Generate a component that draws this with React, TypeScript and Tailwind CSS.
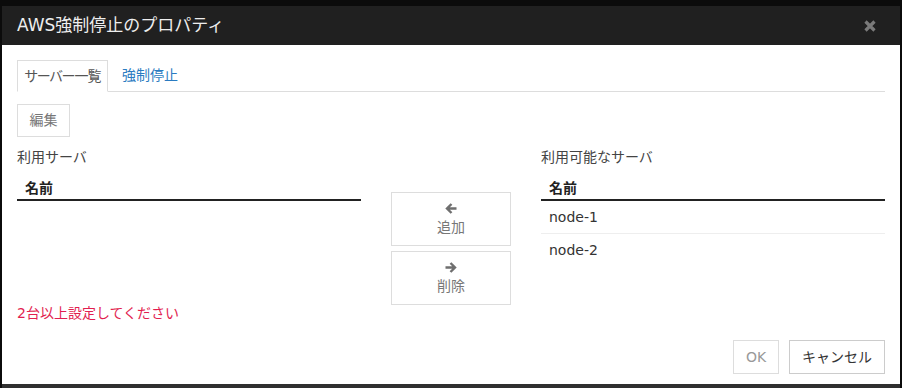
function Arrow({ dir }: { dir: "left" | "right" }) {
  return (
    <svg width="12" height="11" viewBox="0 0 12 11" className={dir === "right" ? "rotate-180" : ""}>
      <path d="M1.5 5.5 H11.5 M6.5 1 L2 5.5 L6.5 10" stroke="#6f6f6f" strokeWidth="2.4" fill="none" />
    </svg>
  );
}

export default function App() {
  return (
    <div className="w-[902px] h-[388px] bg-[#0b0b0b] pt-[6px] px-[2px] overflow-hidden font-['DejaVu_Sans','Noto_Sans_CJK_JP',sans-serif]">
      <div className="w-[898px] h-[378px] flex flex-col bg-white">
        <div className="h-[39px] shrink-0 bg-[#202020] flex items-center justify-between pl-[15px] pr-[24px]">
          <span className="text-[17px] text-[#eeeeee] leading-none">AWS強制停止のプロパティ</span>
          <svg width="12" height="12" viewBox="0 0 12 12">
            <path d="M1.5 1.5 L10.5 10.5 M10.5 1.5 L1.5 10.5" stroke="#7a7a7a" strokeWidth="3.2" />
          </svg>
        </div>
        <div className="flex-1 px-[15px] pt-[15px] flex flex-col text-[14px]">
          <div className="flex border-b border-[#dddddd] h-[32px]">
            <div className="-mb-px h-[32px] w-[91px] border border-[#dddddd] border-b-white bg-white flex items-center justify-center text-[#555555] [font-feature-settings:'palt'] tracking-[-1px]">
              サーバー一覧
            </div>
            <div className="h-[31px] pl-[14px] flex items-center text-[#2a7bc1]">強制停止</div>
          </div>
          <div className="mt-[12px]">
            <div className="h-[33px] w-[53px] border border-[#dddddd] flex items-center justify-center text-[#777777]">
              編集
            </div>
          </div>
          <div className="mt-[10px] flex">
            <div className="w-[344px] flex flex-col">
              <div className="h-[20px] leading-[20px] text-[#444444]">利用サーバ</div>
              <div className="h-[34px] pt-[10px] pl-[8px] flex items-center border-b-2 border-[#222222] font-bold text-[#222222]">
                名前
              </div>
              <div className="mt-[102px] h-[20px] leading-[20px] text-[#e21e50]">2台以上設定してください</div>
            </div>
            <div className="w-[120px] mx-[30px] pt-[45px] flex flex-col gap-[5px]">
              <div className="h-[54px] border border-[#dddddd] flex flex-col items-center pt-[10px] text-[#777777]">
                <Arrow dir="left" />
                <span className="mt-[3px] leading-[20px]">追加</span>
              </div>
              <div className="h-[54px] border border-[#dddddd] flex flex-col items-center pt-[10px] text-[#777777]">
                <Arrow dir="right" />
                <span className="mt-[3px] leading-[20px]">削除</span>
              </div>
            </div>
            <div className="w-[344px] flex flex-col">
              <div className="h-[20px] leading-[20px] text-[#444444]">利用可能なサーバ</div>
              <div className="h-[34px] pt-[10px] pl-[8px] flex items-center border-b-2 border-[#222222] font-bold text-[#222222]">
                名前
              </div>
              <div className="h-[33px] pl-[8px] flex items-center border-b border-[#eeeeee] text-[#333333]">node-1</div>
              <div className="h-[33px] pl-[8px] flex items-center text-[#333333]">node-2</div>
            </div>
          </div>
          <div className="mt-[17px] flex justify-end gap-[10px]">
            <div className="h-[34px] w-[46px] border border-[#dddddd] flex items-center justify-center text-[#999999]">OK</div>
            <div className="h-[34px] w-[96px] border border-[#cccccc] flex items-center justify-center text-[#333333]">
              キャンセル
            </div>
          </div>
        </div>
      </div>
      <div className="h-[4px] bg-[#2f2f2f]"></div>
    </div>
  );
}
